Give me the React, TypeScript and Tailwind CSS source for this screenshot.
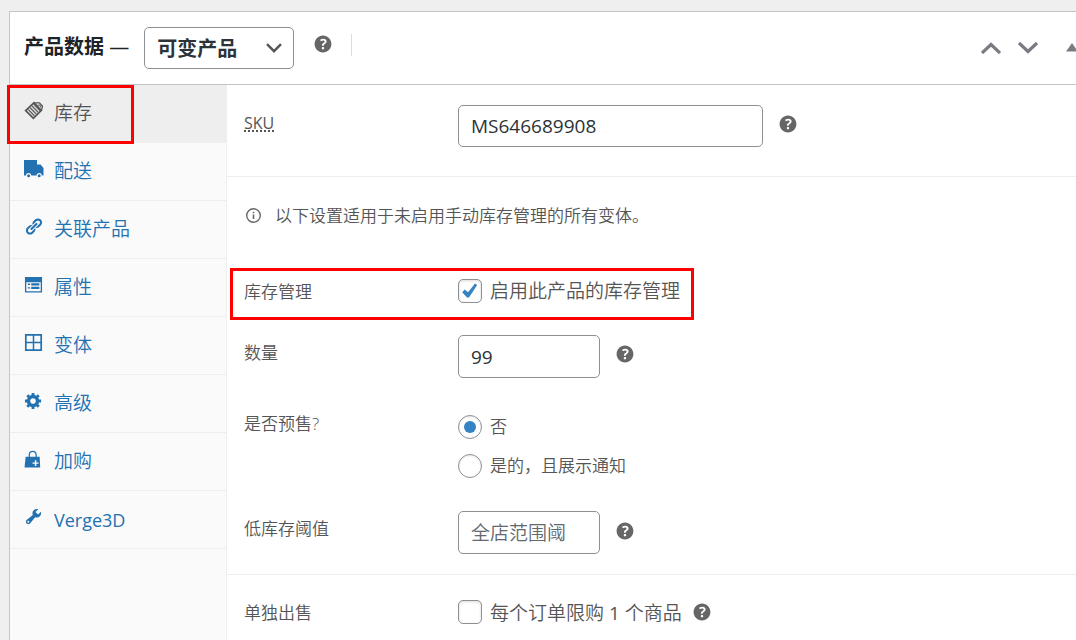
import { useState } from "react";
import type { ReactNode } from "react";
import clsx from "clsx";

const Glyph = ({ d, className }: { d: string; className?: string }) => (
  <svg viewBox="0 0 20 20" fill="currentColor" fillRule="evenodd" className={className} aria-hidden="true">
    <path d={d} />
  </svg>
);

const PATHS = {
  help: "M17 10c0-3.87-3.14-7-7-7-3.87 0-7 3.13-7 7s3.13 7 7 7c3.86 0 7-3.13 7-7zm-6.3 1.48H9.14v-.43c0-.38.08-.7.24-.98s.46-.57.88-.89c.41-.29.68-.53.81-.71.14-.18.2-.39.2-.62 0-.25-.09-.44-.28-.58-.19-.13-.45-.19-.79-.19-.58 0-1.25.19-2 .57l-.64-1.28c.87-.49 1.8-.74 2.77-.74.81 0 1.45.2 1.92.58.48.39.71.91.71 1.55 0 .43-.09.8-.29 1.11-.19.32-.57.67-1.11 1.06-.38.28-.61.49-.71.63-.1.15-.15.34-.15.57v.35zm-1.47 2.74c-.18-.17-.27-.42-.27-.73 0-.33.08-.58.26-.75s.43-.25.77-.25c.32 0 .57.09.75.26s.27.42.27.74c0 .3-.09.55-.27.72-.18.18-.43.27-.75.27-.33 0-.58-.09-.76-.26z",
  truck: "M0 1h13v4.5h3.5L19.5 9v7.5h-1.7a2.6 2.6 0 0 0-5.2 0H7.2a2.6 2.6 0 0 0-5.2 0H0zM4.6 15.3a1.5 1.5 0 1 1 0 3 1.5 1.5 0 0 1 0-3zM15.2 15.3a1.5 1.5 0 1 1 0 3 1.5 1.5 0 0 1 0-3z",
  link: "M17.74 2.76c1.68 1.69 1.68 4.41 0 6.1l-1.53 1.52c-1.12 1.12-2.7 1.47-4.14 1.09l2.62-2.61.76-.77.76-.76c.84-.84.84-2.2 0-3.04-.84-.85-2.2-.85-3.04 0l-.77.76-3.38 3.38c-.37-1.44-.02-3.02 1.1-4.14l1.52-1.53c1.69-1.68 4.42-1.68 6.1 0zM8.59 13.43l5.34-5.34c.42-.42.42-1.1 0-1.52-.44-.43-1.13-.39-1.53 0l-5.33 5.34c-.42.42-.42 1.1 0 1.52.44.43 1.13.39 1.52 0zm-.76 2.29l4.14-4.15c.38 1.44.03 3.02-1.09 4.14l-1.52 1.53c-1.69 1.68-4.41 1.68-6.1 0-1.68-1.68-1.68-4.42 0-6.1l1.53-1.52c1.12-1.12 2.7-1.47 4.14-1.1l-4.14 4.15c-.85.84-.85 2.2 0 3.05.84.84 2.2.84 3.04 0z",
  list: "M1 2h18v16.5H1zM2.4 7.5v9.5h15.2V7.5zM4 9h2.4v1.5H4zM7.6 8.6h8.6v2.4H7.6zM4 12.8h2.4v1.5H4zM7.6 12.4h8.6v2.4H7.6z",
  grid: "M1 1h18v18H1zM2.8 2.8v6.4h6.4V2.8zM10.8 2.8v6.4h6.4V2.8zM2.8 10.8v6.4h6.4v-6.4zM10.8 10.8v6.4h6.4v-6.4z",
  gear: "M18 12h-2.18c-.17.7-.44 1.35-.81 1.93l1.54 1.54-2.1 2.1-1.54-1.54c-.58.36-1.23.63-1.91.79V19H8v-2.18c-.68-.16-1.33-.43-1.91-.79l-1.54 1.54-2.12-2.12 1.54-1.54c-.36-.58-.63-1.23-.79-1.91H1V9.03h2.17c.16-.7.44-1.35.8-1.94L2.43 5.55l2.1-2.1 1.54 1.54c.58-.37 1.24-.64 1.93-.81V2h3v2.18c.68.16 1.33.43 1.91.79l1.54-1.54 2.12 2.12-1.54 1.54c.36.59.64 1.24.8 1.94H18V12zm-8.5 1.5c1.66 0 3-1.34 3-3s-1.34-3-3-3-3 1.34-3 3 1.34 3 3 3z",
  bag: "M1.8 7.5h3.4V5.2a4.5 4.5 0 0 1 9 0v2.3h3.2L18 19.5H.6zM6.6 7.5h6.2V5.2a3.1 3.1 0 0 0-6.2 0zM12 11.5v2.3H9.5v1.6H12v2.4h1.7v-2.4h2.5v-1.6h-2.5v-2.3z",
  wrench: "M16.68 9.77c-1.34 1.34-3.3 1.67-4.95.99l-5.41 6.52c-.99.99-2.59.99-3.58 0s-.99-2.59 0-3.57l6.52-5.42c-.68-1.65-.35-3.61.99-4.95 1.28-1.28 3.12-1.62 4.72-1.06l-2.89 2.89 2.82 2.82 2.86-2.87c.53 1.58.18 3.39-1.08 4.65zM3.81 16.21c.4.39 1.04.39 1.43 0 .4-.4.4-1.04 0-1.43-.39-.4-1.03-.4-1.43 0-.39.39-.39 1.03 0 1.43z",
};

const NoteIcon = () => (
  <svg viewBox="0 0 20 20" className="size-5" fill="none" aria-hidden="true">
    <path d="M1.6 9.6 10 1.8 17.2 9.6 9.4 17.4z" fill="#ddd" stroke="#555" strokeWidth="1.7" />
    <path d="M4.4 8.6l6 6.2M6.3 6.9l6 6.2M8.2 5.2l6 6.2M10 3.4l6 6.2" stroke="#555" strokeWidth="1.2" />
    <path d="M10.5 1.8h5l3 3.4-1 4.2" stroke="#555" strokeWidth="1.3" />
    <path d="M13.4 4.2l2.6-.2.6 2.6" stroke="#555" strokeWidth="1" />
  </svg>
);

const TABS: { id: string; label: string; icon: ReactNode }[] = [
  { id: "inventory", label: "库存", icon: <NoteIcon /> },
  { id: "shipping", label: "配送", icon: <Glyph d={PATHS.truck} className="size-5" /> },
  { id: "linked", label: "关联产品", icon: <Glyph d={PATHS.link} className="size-[19px]" /> },
  { id: "attributes", label: "属性", icon: <Glyph d={PATHS.list} className="size-[19px]" /> },
  { id: "variations", label: "变体", icon: <Glyph d={PATHS.grid} className="size-[19px]" /> },
  { id: "advanced", label: "高级", icon: <Glyph d={PATHS.gear} className="size-[19px]" /> },
  { id: "upsell", label: "加购", icon: <Glyph d={PATHS.bag} className="size-[18px]" /> },
  { id: "verge3d", label: "Verge3D", icon: <Glyph d={PATHS.wrench} className="size-[19px]" /> },
];

const Help = ({ className }: { className?: string }) => (
  <button type="button" aria-label="帮助" className={clsx("shrink-0 text-[#666]", className)}>
    <Glyph d={PATHS.help} className="size-6" />
  </button>
);

const Chevron = ({ className }: { className?: string }) => (
  <svg viewBox="0 0 20 12" className={clsx("w-5 h-3", className)} fill="none" aria-hidden="true">
    <path d="M1 1 10 9.5 19 1" stroke="currentColor" strokeWidth="3.2" />
  </svg>
);

const Row = ({ className, children }: { className?: string; children: ReactNode }) => (
  <div className={clsx("flex items-start pl-[17px]", className)}>{children}</div>
);

const LABEL = "w-[214px] shrink-0 pt-1.5 text-[17px] leading-6";
const FIELD =
  "rounded-[5px] border border-[#8c8f94] bg-white px-3 font-normal text-[19px] text-[#2c3338] placeholder:text-[#646970]";

const Check = ({ id, defaultChecked }: { id: string; defaultChecked?: boolean }) => (
  <span className="relative size-6 shrink-0">
    <input
      id={id}
      type="checkbox"
      defaultChecked={defaultChecked}
      className="peer block size-6 appearance-none rounded-[5px] border border-[#8c8f94] bg-white shadow-[inset_0_1px_3px_rgba(0,0,0,0.15)]"
    />
    <svg
      viewBox="0 0 24 24"
      className="pointer-events-none absolute inset-0 hidden size-6 text-[#3582c4] peer-checked:block"
      fill="currentColor"
      aria-hidden="true"
    >
      <path d="M17 4.5l2.2 1.6-8.2 12.4H9L4.2 13.3l2.6-2.7 3.2 2.7z" />
    </svg>
  </span>
);

const PRESALE = [
  { value: "no", label: "否" },
  { value: "notice", label: "是的，且展示通知" },
];

const Header = () => (
  <header className="flex h-18 items-center pl-3.5">
    <label htmlFor="product-type" className="shrink-0 pb-0.5 text-xl text-[#1d2327]">
      <span className="font-bold">产品数据</span> <span className="font-normal">—</span>
    </label>
    <div className="relative ml-[15px] w-[150px] shrink-0">
      <select
        id="product-type"
        className="block h-[42px] w-full appearance-none rounded-[5px] border border-[#8c8f94] bg-white pt-0.5 pl-3 text-xl font-bold text-[#2c3338]"
      >
        <option>可变产品</option>
      </select>
      <svg viewBox="0 0 16 10" className="pointer-events-none absolute top-4 right-3 w-4" fill="none" aria-hidden="true">
        <path d="M1 1.2 8 8.2 15 1.2" stroke="#555" strokeWidth="2.4" />
      </svg>
    </div>
    <Help className="mb-2 ml-[17px]" />
    <span className="mb-1.5 ml-4 h-[22px] w-px bg-[#ddd]" />
    <div className="-mr-1 ml-auto flex items-center text-[#787c82]">
      <button type="button" aria-label="上移">
        <Chevron className="rotate-180" />
      </button>
      <button type="button" aria-label="下移" className="ml-[17px]">
        <Chevron />
      </button>
      <button type="button" aria-label="切换面板" className="mb-0.5 ml-7">
        <svg viewBox="0 0 14 10" className="w-3.5" fill="currentColor" aria-hidden="true">
          <path d="M0 9.5 6 1 12 9.5z" />
        </svg>
      </button>
    </div>
  </header>
);

const Sidebar = ({ active, onSelect }: { active: string; onSelect: (id: string) => void }) => (
  <ul className="w-[217px] shrink-0 border-r border-[#eee] bg-[#fafafa]">
    {TABS.map((tab) => (
      <li key={tab.id} className="relative">
        <a
          href={`#${tab.id}`}
          onClick={() => onSelect(tab.id)}
          className={clsx(
            "flex h-[58px] items-center border-b border-[#eee] pl-3.5",
            active === tab.id ? "-mr-px bg-[#eee] text-[#555]" : "text-[#2271b1]",
            tab.id === "verge3d" ? "text-lg font-normal" : "text-[19px]",
          )}
        >
          <span className="flex w-[30px] shrink-0 pb-1.5">{tab.icon}</span>
          {tab.label}
        </a>
        {tab.id === "inventory" && (
          <span className="pointer-events-none absolute top-0 -left-[3px] z-10 h-[59px] w-[127px] border-3 border-[#f00]" />
        )}
      </li>
    ))}
  </ul>
);

const InventoryPanel = () => (
  <div className="min-w-0 flex-1 text-[#555]">
    <Row className="border-b border-[#eee] pt-5 pb-[29px]">
      <label htmlFor="sku" className={LABEL}>
        <abbr
          title="库存单位"
          className="text-base font-normal underline decoration-dotted decoration-2 underline-offset-1"
        >
          SKU
        </abbr>
      </label>
      <input id="sku" type="text" defaultValue="MS646689908" className={clsx(FIELD, "h-[42px] w-[305px]")} />
      <Help className="mt-[7px] ml-[13px]" />
    </Row>

    <div className="flex items-center pt-[27px] pb-10 pl-[18px] text-[17px] leading-6">
      <svg viewBox="0 0 18 18" className="mr-3 size-[18px] shrink-0" fill="none" stroke="#666" aria-hidden="true">
        <circle cx="8.5" cy="8.5" r="6.8" strokeWidth="1.4" />
        <path d="M8.5 7.5v4.6M8.5 4.7v1.6" strokeWidth="1.6" />
      </svg>
      <p>以下设置适用于未启用手动库存管理的所有变体。</p>
    </div>

    {/* Stock management */}
    <Row className="relative pt-[11px] pb-[15px]">
      <span className="w-[214px] shrink-0 text-[17px] leading-[26px]">库存管理</span>
      <Check id="manage-stock" defaultChecked />
      <label htmlFor="manage-stock" className="ml-2 text-[19px] leading-6">
        启用此产品的库存管理
      </label>
      <span className="pointer-events-none absolute inset-y-0 left-[3px] w-[464px] border-3 border-[#f00]" />
    </Row>

    <Row className="pt-[15px]">
      <label htmlFor="quantity" className={LABEL}>
        数量
      </label>
      <input id="quantity" type="text" defaultValue="99" className={clsx(FIELD, "h-[43px] w-[142px]")} />
      <Help className="mt-[7px] ml-[13px]" />
    </Row>

    {/* Pre-sale */}
    <Row className="pt-[37px]">
      <span id="presale" className="w-[214px] shrink-0 text-[17px] leading-[18px]">
        是否预售?
      </span>
      <div role="radiogroup" aria-labelledby="presale" className="flex flex-col gap-[15px]">
        {PRESALE.map((option, i) => (
          <label key={option.value} className="flex items-center gap-2 text-[17px] leading-6">
            <input
              type="radio"
              name="presale"
              value={option.value}
              defaultChecked={i === 0}
              className="grid size-6 appearance-none place-items-center rounded-full border border-[#8c8f94] bg-white shadow-[inset_0_1px_2px_rgba(0,0,0,0.1)] checked:before:size-3 checked:before:rounded-full checked:before:bg-[#3582c4]"
            />
            {option.label}
          </label>
        ))}
      </div>
    </Row>

    <Row className="border-b border-[#eee] pt-[33px] pb-5">
      <label htmlFor="low-stock" className={LABEL}>
        低库存阈值
      </label>
      <input
        id="low-stock"
        type="text"
        placeholder="全店范围阈"
        className={clsx(FIELD, "h-[43px] w-[142px] placeholder:font-[350]")}
      />
      <Help className="mt-2 ml-[13px]" />
    </Row>

    {/* Sold individually */}
    <Row className="pt-[25px] pb-3">
      <span className="w-[214px] shrink-0 text-[17px] leading-[26px]">单独出售</span>
      <Check id="sold-individually" />
      <label htmlFor="sold-individually" className="ml-2 text-[19px] leading-[26px]">
        每个订单限购 <span className="font-normal">1</span> 个商品
      </label>
      <Help className="ml-2" />
    </Row>
  </div>
);

const App = () => {
  const [active, setActive] = useState("inventory");

  return (
    <main className="flex min-h-screen flex-col overflow-hidden bg-[#efefef] pt-[11px] pl-[9px] font-['Open_Sans','Noto_Sans_CJK_SC',sans-serif] font-[350]">
      <section className="flex flex-1 flex-col border-t border-l border-[#c3c4c7] bg-white">
        <Header />
        <div className="flex flex-1 border-t border-[#c3c4c7]">
          <Sidebar active={active} onSelect={setActive} />
          <InventoryPanel />
        </div>
      </section>
    </main>
  );
};

export default App;
